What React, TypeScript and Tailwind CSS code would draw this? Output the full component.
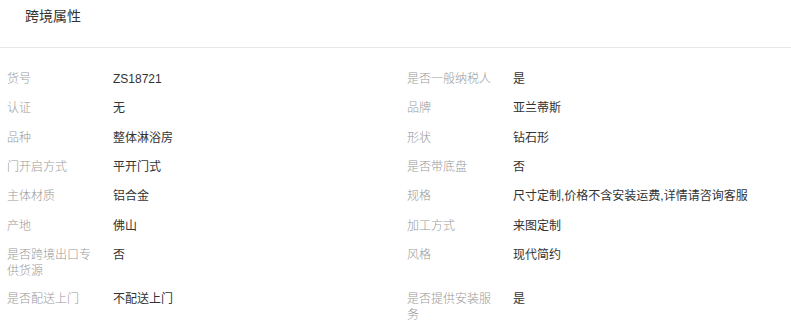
const attrs: [string, string][] = [
  ["货号", "ZS18721"],
  ["是否一般纳税人", "是"],
  ["认证", "无"],
  ["品牌", "亚兰蒂斯"],
  ["品种", "整体淋浴房"],
  ["形状", "钻石形"],
  ["门开启方式", "平开门式"],
  ["是否带底盘", "否"],
  ["主体材质", "铝合金"],
  ["规格", "尺寸定制,价格不含安装运费,详情请咨询客服"],
  ["产地", "佛山"],
  ["加工方式", "来图定制"],
  ["是否跨境出口专供货源", "否"],
  ["风格", "现代简约"],
  ["是否配送上门", "不配送上门"],
  ["是否提供安装服务", "是"],
];

function AttrItem({ label, value }: { label: string; value: string }) {
  return (
    <div className="flex items-start min-h-[29.33px] pt-[7px] pb-[5px] text-[12px] leading-4">
      <div className="w-[106px] shrink-0 pr-[14px] font-light text-[#999999] break-all">{label}</div>
      <div className="flex-1 text-[#333333]">{value}</div>
    </div>
  );
}

export default function App() {
  return (
    <div
      className="w-[791px] h-[328px] bg-white overflow-hidden"
      style={{ fontFamily: '"Liberation Sans", "Noto Sans CJK SC", sans-serif' }}
    >
      <div className="h-[48px] border-b border-[#e8e8e8] pl-[25px] pt-[8px]">
        <h2 className="text-[14px] leading-[17px] text-[#333333]">跨境属性</h2>
      </div>
      <div className="grid grid-cols-[400px_1fr] pl-[7px] pt-[16px]">
        {attrs.map(([label, value]) => (
          <AttrItem key={label} label={label} value={value} />
        ))}
      </div>
    </div>
  );
}
